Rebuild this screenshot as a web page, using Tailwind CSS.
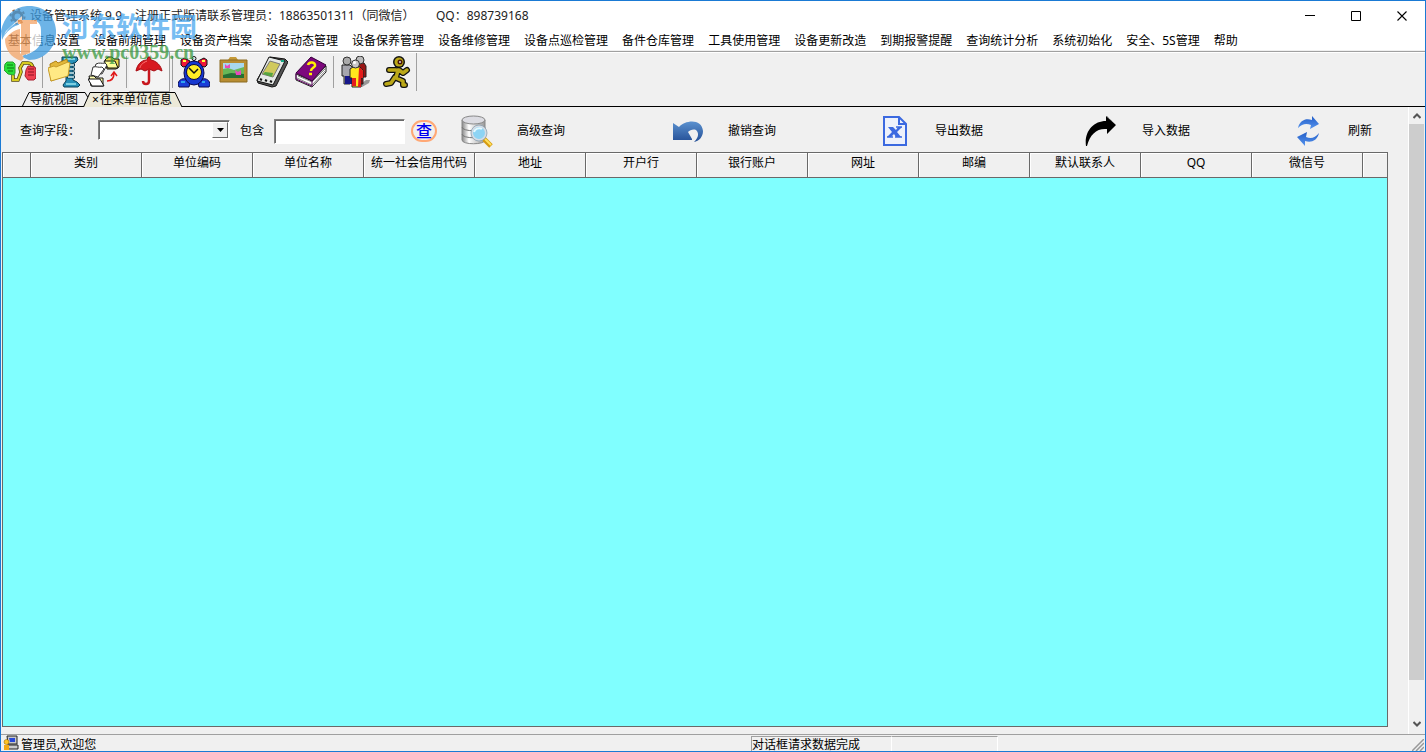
<!DOCTYPE html>
<html lang="zh-CN">
<head>
<meta charset="utf-8">
<title>设备管理系统 9.9</title>
<script src="https://cdn.jsdelivr.net/npm/@tailwindcss/browser@4"></script>
</head>
<body class="h-screen overflow-hidden bg-[#f0f0f0] text-black text-xs font-['Noto_Sans','Noto_Sans_CJK_SC',sans-serif]">
<div class="relative flex h-full flex-col border border-[#1a7ad4]">

  <!-- title bar -->
  <header class="flex h-[30px] shrink-0 items-center bg-white pl-2 whitespace-pre">
    <svg class="mr-1 size-[17px]" viewBox="0 0 17 17"><circle cx="8.500" cy="8.500" r="4.500" fill="none" stroke="#a8602c" stroke-width="3"/><circle cx="8.500" cy="8.500" r="7" fill="none" stroke="#a8602c" stroke-width="2" stroke-dasharray="2.500 3"/></svg>
    <h1 class="flex text-[#222]"><span class="w-[105px]">设备管理系统 9.9</span><span class="w-[301px]">注册正式版请联系管理员：18863501311（同微信）</span><span>QQ：898739168</span></h1>
    <div class="ml-auto flex">
      <button aria-label="最小化" class="grid h-7 w-[46px] place-items-center"><svg class="size-[11px]" viewBox="0 0 11 11"><path d="M0 4.500h10" stroke="#000"/></svg></button>
      <button aria-label="最大化" class="grid h-7 w-[46px] place-items-center"><svg class="size-[11px]" viewBox="0 0 11 11"><path d="M.5.500h9v9h-9z" stroke="#000" fill="none"/></svg></button>
      <button aria-label="关闭" class="grid h-7 w-[46px] place-items-center"><svg class="size-[11px]" viewBox="0 0 11 11"><path d="M.5.500l9 9M9.500.500l-9 9" stroke="#000" stroke-width="1.100"/></svg></button>
    </div>
  </header>

  <!-- menu -->
  <nav class="flex h-[19px] shrink-0 items-center gap-[14px] bg-white pl-[7px] whitespace-nowrap">
    <button>基本信息设置</button><button>设备前期管理</button><button>设备资产档案</button><button>设备动态管理</button><button>设备保养管理</button><button>设备维修管理</button><button>设备点巡检管理</button><button>备件仓库管理</button><button>工具使用管理</button><button>设备更新改造</button><button>到期报警提醒</button><button>查询统计分析</button><button>系统初始化</button><button>安全、5S管理</button><button>帮助</button>
  </nav>

  <!-- toolbar -->
  <div class="mt-px flex h-[41px] shrink-0 items-center border-t border-[#a0a0a0] pl-[3px] shadow-[inset_0_1px_0_#fff]">
    <button aria-label="连接"><svg class="size-8" viewBox="0 0 32 32"><path d="M9 19l0 5h5l3-8-1-4 3-5h5q4 0 5 5" fill="none" stroke="#554a08" stroke-width="3.500"/><path d="M9 19l0 5h5l3-8-1-4 3-5h5q4 0 5 5" fill="none" stroke="#d8cc20" stroke-width="2"/><path d="M1 8l2-2h6l2 2v9l-1 2-6-1-4-4z" fill="#28e038" stroke="#2aa030"/><path d="M3 9h6M3 12h7M4 15h5" stroke="#0a7810"/><path d="M22 14l2-4 7 1 1 3v8l-2 2h-6l-3-4z" fill="#f04050" stroke="#a82030"/><path d="M24 13h6M24 16h6M24 19h6" stroke="#8c1020"/></svg></button>
    <i class="ml-[6px] h-8 w-px bg-[#a0a0a0]"></i>
    <button aria-label="压缩文件" class="ml-[5px]"><svg class="size-8" viewBox="0 0 32 32"><path d="M14 1h15l1 3-3 3h-2v17l4 2 3 3-2 2H16l-1-2 3-4V7l-4-2z" fill="#2790b8" stroke="#073d55"/><path d="M16 3h11M18 28h10" stroke="#9ce3ee" stroke-width="1.500"/><path d="M19 9h8M19 13h8M19 17h8M19 21h8" stroke="#073d55" stroke-width="3"/><path d="M20 9h6M20 13h6M20 17h6M20 21h6" stroke="#d8f4f8" stroke-width="1.500"/><path d="M2 8l6-3 2 2 9-4 2 15L3 25z" fill="#e3b83a" stroke="#ad8015"/><path d="M0 12l6-2 2 1 12-5 2 1-2 13L3 25z" fill="#ffe984" stroke="#c79b28"/></svg></button>
    <button aria-label="移动文件" class="ml-2"><svg class="size-8" viewBox="0 0 32 32"><path d="M17 4l3-3h4l2 2h5l0 8-3 2h-9z" fill="#ead54c" stroke="#111"/><path d="M16 5h11l3 7H20z" fill="#ffff9a" stroke="#111"/><path d="M8 8c4-2 5 0 9-1l2 2-5 9-9-2z" fill="#fff" stroke="#333"/><path d="M5 11c4-1 5 1 9 0l2 2-6 8-7-2z" fill="#fff" stroke="#333"/><path d="M1 20h5l2 2h7v8H3z" fill="#ffffb0" stroke="#111"/><path d="M0 23h12l4 7H4z" fill="#fff" stroke="#111"/><path d="M19 25c5 0 7-3 7-8m-3 3 3-4 3 4" fill="none" stroke="#e01818" stroke-width="1.500"/></svg></button>
    <i class="ml-[6px] h-8 w-px bg-[#a0a0a0]"></i>
    <button aria-label="往来单位" class="ml-[2px] grid h-10 w-[41px] place-items-center border-r border-b border-[#a0a0a0] bg-[#f4f4f4]"><svg class="size-8" viewBox="0 0 32 32"><path d="M15 1l2 0 1 3C24 5 28 10 29 15l-4-2-4 2-5-2-4 2-4-2-5 2C4 9 8 4 14 4z" fill="#d71920" stroke="#a80d14"/><path d="M14 5c-5 2-7 5-7 7" stroke="#ff7777" fill="none"/><path d="M16 13v12q0 3-3 3t-3-3" fill="none" stroke="#c8171e" stroke-width="2.500"/></svg></button>
    <i class="ml-[2px] h-8 w-px bg-[#a0a0a0]"></i>
    <button aria-label="提醒" class="ml-[5px]"><svg class="size-8" viewBox="0 0 32 32"><path d="M16 1v6" stroke="#111" stroke-width="2"/><circle cx="16" cy="2.500" r="2" fill="#eee" stroke="#111"/><path d="M3 4l3-2 6 3-2 5-5 1-2-2zM29 4l-3-2-6 3 2 5 5 1 2-2z" fill="#ee1838" stroke="#111"/><path d="M5 5h3M24 5h3" stroke="#ffff40" stroke-width="2"/><path d="M0 29c0-5 4-7 8-6l4 4-1 4H1zM32 29c0-5-4-7-8-6l-4 4 1 4h10z" fill="#1a3ed8" stroke="#080850"/><path d="M3 26h4M24 26h3" stroke="#38c8f8" stroke-width="1.500"/><ellipse cx="16" cy="17" rx="10" ry="12" fill="#1638d0" stroke="#080850"/><circle cx="16" cy="16" r="7.500" fill="#ffed26" stroke="#080850"/><path d="M11 12l5 5 4-4" fill="none" stroke="#111" stroke-width="1.500"/></svg></button>
    <button aria-label="图片" class="ml-[7px]"><svg class="size-8" viewBox="0 0 32 32"><path d="M11 4l2-3h6l2 3z" fill="#c59a38"/><path d="M3 4h27v22H3z" fill="#b88d32" stroke="#8b6b20"/><path d="M6 7h21v15H6z" fill="#a8d8ee"/><path d="M6 13l5-1 6 2 10-3v11H6z" fill="#68b858"/><path d="M6 19l8-2 13 1v4H6z" fill="#267034"/><path d="M8 8l2 2 3-2v4H8zM18 14l3 2 3-2v5h-5z" fill="#e948bd"/></svg></button>
    <button aria-label="手持设备" class="ml-[7px]"><svg class="size-8" viewBox="0 0 32 32"><path d="M14 1l15 2 3 3-12 24-4 1-14-4-1-3z" fill="#555" stroke="#111"/><path d="M13 1l16 4-12 24L1 25z" fill="#e5e8e6" stroke="#111"/><path d="M14 5l10 3-7 13-11-3z" fill="#d0c95d" stroke="#777"/><path d="M9 16l8 1-1 4-9-3z" fill="#55a440"/><path d="M4 23l2 1m3 0 2 1m3 0 2 1" stroke="#111" stroke-width="2"/><path d="M25 5h3" stroke="#16a884" stroke-width="2"/></svg></button>
    <button aria-label="帮助手册" class="ml-[7px]"><svg class="size-8" viewBox="0 0 32 32"><path d="M1 18l16 7L31 10v6L17 31 1 24z" fill="#fff" stroke="#222"/><path d="M3 20l14 6L31 12M2 22l15 7 14-15" fill="none" stroke="#888"/><path d="M1 17L16 1l15 8-14 16z" fill="#7d087d" stroke="#36003a"/><path d="M1 17v6l16 7v-5" fill="none" stroke="#5d0060"/><path d="M13 9c1-4 8-3 7 1-1 2-4 2-4 5" fill="none" stroke="#fff000" stroke-width="2.500"/><path d="M14 18h3" stroke="#fff000" stroke-width="2.500"/></svg></button>
    <i class="ml-[6px] h-8 w-px bg-[#a0a0a0]"></i>
    <button aria-label="用户" class="ml-[6px]"><svg class="size-8" viewBox="0 0 32 32"><path d="M18 30l8-6h4l-1 3-7 4z" fill="#999"/><path d="M2 9h8l3 3v10h-3v6H4V20H2z" fill="#a6a6ad" stroke="#222"/><path d="M5 20h8v8H5z" fill="#17178a"/><path d="M17 7h7l2 3v11h-3v7h-6z" fill="#981515" stroke="#222"/><path d="M10 13l3-2h7l3 3v8h-2v9h-9v-9h-2z" fill="#ffe61d" stroke="#222"/><path d="M19 12h2l2 3v7h-2v9h-3z" fill="#e41c1c"/><path d="M12 22h4v8h-4z" fill="#e41c1c"/><circle cx="7" cy="5" r="4" fill="#aaa" stroke="#333"/><circle cx="20" cy="4" r="4" fill="#bbb" stroke="#333"/><circle cx="15.500" cy="8" r="4" fill="#c8c8c8" stroke="#333"/><circle cx="14.500" cy="6.500" r="1.500" fill="#fff"/></svg></button>
    <button aria-label="退出" class="ml-[9px]"><svg class="size-8" viewBox="0 0 32 32"><path d="M15 14l-7 0M17 14l-2 8 7 3 0 4 2 0M14 21l-4 6-5 1M18 14l4 3 4-3" fill="none" stroke="#111" stroke-width="6" stroke-linecap="round" stroke-linejoin="round"/><circle cx="18" cy="6" r="6" fill="#111"/><path d="M15 14l-7 0M17 14l-2 8 7 3 0 4 2 0M14 21l-4 6-5 1M18 14l4 3 4-3" fill="none" stroke="#bba818" stroke-width="3.500" stroke-linecap="round" stroke-linejoin="round"/><circle cx="18" cy="6" r="4.500" fill="#bba818"/><circle cx="19" cy="6" r="2.500" fill="#4a1408"/><circle cx="19" cy="6" r="1" fill="#ddd"/></svg></button>
    <i class="ml-[3px] h-[38px] w-px bg-[#a0a0a0]"></i>
  </div>

  <!-- document tabs -->
  <div class="flex h-[15px] shrink-0 items-end border-b border-black pl-[21px]" role="tablist">
    <button role="tab" class="relative h-[14px] w-[66px] pl-2 text-left leading-4"><svg class="absolute inset-0 h-[14px] w-[66px]" viewBox="0 0 66 14"><path d="M.5 14L7 .5h56l3 5" fill="none" stroke="#000"/></svg><span class="relative">导航视图</span></button>
    <button role="tab" aria-selected="true" class="relative -mb-px h-[15px] w-[100px] pl-1 text-left leading-4 whitespace-nowrap"><svg class="absolute top-0 -left-2 h-[15px] w-[106px]" viewBox="0 0 106 15"><path d="M3.500 15L10 .5h85l7 14.500" fill="#ece9d8" stroke="#000"/></svg><span class="relative flex items-center"><span class="w-2">×</span>往来单位信息</span></button>
  </div>

  <main class="flex min-h-0 flex-1">
    <section class="flex min-w-0 flex-1 flex-col pr-5 pb-[7px] pl-px">
      <!-- query bar -->
      <form class="flex h-[45px] shrink-0 items-center pt-[3px] pl-[18px] whitespace-nowrap">
        <label for="field" class="w-[78px]">查询字段：</label>
        <span class="relative mb-[3px] flex h-5 w-[132px] border border-t-[#808080] border-r-white border-b-white border-l-[#808080] bg-white">
          <select id="field" class="w-full appearance-none bg-white shadow-[inset_1px_1px_0_#696969]"><option></option></select>
          <span class="pointer-events-none absolute top-px right-px grid h-4 w-4 place-items-center border border-t-white border-r-[#696969] border-b-[#696969] border-l-white bg-[#f0f0f0]"><svg class="h-1 w-[7px]" viewBox="0 0 7 4"><path d="M0 0h7L3.500 4z"/></svg></span>
        </span>
        <label for="keyword" class="ml-[10px] w-[34px]">包含</label>
        <input id="keyword" class="h-[25px] w-[131px] border border-t-[#808080] border-r-white border-b-white border-l-[#808080] bg-white px-1 shadow-[inset_1px_1px_0_#696969] outline-none">
        <button type="button" class="ml-[6px] grid h-[22px] w-[26px] place-items-center rounded-full border-2 border-[#ffa875] text-base leading-4 font-medium text-[#0000f0]">查</button>
        <button type="button" class="ml-[23px] flex items-center gap-6"><svg class="size-[33px]" viewBox="0 0 33 33"><defs><linearGradient id="metal"><stop stop-color="#888"/><stop offset=".3" stop-color="#fff"/><stop offset="1" stop-color="#999"/></linearGradient></defs><path d="M2 5v20c0 5 23 5 23 0V5" fill="url(#metal)" stroke="#888"/><ellipse cx="13.500" cy="5" rx="11.500" ry="4" fill="#dcdce2" stroke="#888"/><path d="M2 12c0 5 23 5 23 0M2 19c0 5 23 5 23 0" fill="none" stroke="#777"/><path d="M24 24l7 7" stroke="#d69b13" stroke-width="5"/><path d="M25 24l6 6" stroke="#ffe05b" stroke-width="2"/><circle cx="19" cy="18" r="7" fill="#8dd4f4" stroke="#d5dce5" stroke-width="2"/><circle cx="19" cy="18" r="8" fill="none" stroke="#7f96a8" stroke-width=".700"/><path d="M14 17c1-3 5-5 8-3" stroke="#e5f9ff" stroke-width="2" fill="none"/></svg>高级查询</button>
        <button type="button" class="ml-[107px] flex items-center gap-6"><svg class="h-6 w-8" viewBox="0 0 32 24"><defs><linearGradient id="undo" x2="0" y2="1"><stop stop-color="#5b91cf"/><stop offset="1" stop-color="#244f96"/></linearGradient></defs><path d="M1 4l6 4C13 1 30-1 31 12c0 6-4 10-9 11 5-5 5-9 2-12-3-1-6 0-8 2l4 7v1H1z" fill="url(#undo)"/></svg>撤销查询</button>
        <button type="button" class="ml-[107px] flex items-center gap-7"><svg class="h-[30px] w-6" viewBox="0 0 24 30"><path d="M1 1h15l7 7v21H1z" fill="#edf1fb" stroke="#3b69e0" stroke-width="2"/><path d="M16 1v7h7" fill="none" stroke="#3b69e0" stroke-width="2"/><path d="M5 11h5l3 3 2-3h4l-5 5 4 5h-5l-2-3-3 3H4l5-5z" fill="#3b69e0"/><path d="M13 11h6M4 21h6M12 21h7" stroke="#3b69e0" stroke-width="1.500"/></svg>导出数据</button>
        <button type="button" class="ml-[102px] flex items-center gap-[25px]"><svg class="size-8" viewBox="0 0 32 32"><path d="M1 31C-1 17 8 6 21 6V1l10 9-9 9v-5C12 13 5 19 2 31z" fill="#000"/><path d="M22 1l9 9" stroke="#999" stroke-dasharray="1 1"/></svg>导入数据</button>
        <button type="button" class="ml-[105px] flex items-center gap-[26px]"><svg class="h-8 w-[27px]" viewBox="0 0 27 32"><defs><linearGradient id="sync" x2="0" y2="1"><stop stop-color="#225dc7"/><stop offset="1" stop-color="#5795ee"/></linearGradient></defs><path d="M3 13C5 5 11 3 17 5V1l7 8-9 5 1-4c-5-2-9-1-13 3z" fill="url(#sync)"/><path d="M24 18c-2 8-8 10-14 8v5l-8-9 10-5-1 5c5 2 9 1 13-4z" fill="url(#sync)"/></svg>刷新</button>
      </form>

      <!-- records -->
      <div class="min-h-0 flex-1 overflow-hidden border border-[#696969] bg-[#80ffff]">
        <table class="w-full table-fixed border-separate border-spacing-0">
          <colgroup><col class="w-[28px]"><col><col><col><col><col><col><col><col><col><col><col><col><col class="w-6"></colgroup>
          <thead><tr class="h-[25px] bg-[#f0f0f0] whitespace-nowrap [&>th]:border-r [&>th]:border-b [&>th]:border-[#696969] [&>th]:p-0 [&>th]:pb-1 [&>th]:font-normal [&>th]:shadow-[inset_1px_1px_0_#fff] [&>th:last-child]:border-r-0">
            <th></th><th>类别</th><th>单位编码</th><th>单位名称</th><th>统一社会信用代码</th><th>地址</th><th>开户行</th><th>银行账户</th><th>网址</th><th>邮编</th><th>默认联系人</th><th>QQ</th><th>微信号</th><th></th>
          </tr></thead>
        </table>
      </div>
    </section>

    <!-- vertical scroll bar -->
    <div class="mr-px flex w-4 shrink-0 flex-col border-l border-white">
      <button aria-label="向上滚动" class="grid h-[17px] shrink-0 place-items-center"><svg class="h-[6px] w-2" viewBox="0 0 8 6"><path d="M.5 5L4 1.500 7.500 5" fill="none" stroke="#555" stroke-width="2"/></svg></button>
      <div class="min-h-0 flex-1 pb-[35px]"><div class="h-full bg-[#cdcdcd]"></div></div>
      <button aria-label="向下滚动" class="mb-[2px] grid h-[17px] shrink-0 place-items-center"><svg class="h-[6px] w-2" viewBox="0 0 8 6"><path d="M.5 1L4 4.500 7.500 1" fill="none" stroke="#555" stroke-width="2"/></svg></button>
    </div>
  </main>

  <!-- status bar -->
  <footer class="flex h-[17px] shrink-0 border-t border-[#a0a0a0] leading-4 whitespace-nowrap">
    <div class="flex w-[750px] items-center pl-[2px]"><svg class="mr-[2px] size-4" viewBox="0 0 16 16"><path d="M4 1h10v8H5z" fill="#c8c8c8" stroke="#222"/><path d="M6 3h6v4H7z" fill="#2848d8"/><path d="M4 10h11v4H4z" fill="#ccc" stroke="#222"/><circle cx="3.500" cy="7" r="2.500" fill="#ffc423" stroke="#885b00" stroke-width=".500"/><path d="M1 10h5v5H1z" fill="#f3aa13"/></svg><span class="pt-[3px]">管理员,欢迎您</span></div>
    <div class="mt-px w-[141px] border-t border-r border-l border-t-[#a0a0a0] border-r-white border-l-[#a0a0a0]">对话框请求数据完成</div>
    <div class="mt-px w-[106px] border-t border-r border-t-[#a0a0a0] border-r-white"></div>
    <svg class="mt-1 mr-px ml-auto size-3" viewBox="0 0 12 12"><path d="M0 12L12 0M4 12l8-8M8 12l4-4" stroke="#999" stroke-width="1.500"/></svg>
  </footer>

  <!-- download site watermark -->
  <div class="pointer-events-none absolute top-0 left-0 flex opacity-75" aria-hidden="true">
    <svg class="h-[62px] w-[60px]" viewBox="0 0 60 62"><path d="M0 30C3 15 13 6 26 5c16-1 28 9 29 24 1 17-11 30-27 30l-7-3c2-3 6-5 12-7V23H20C12 25 5 30 1 39z" fill="#3d9be0"/><path d="M2 36C7 27 13 22 21 20v-5L5 30z" fill="#fff"/><path d="M4 38c4-5 9-9 15-10v24l4 5-3 3C9 56 4 48 4 38z" fill="#f3a466"/><path d="M18 20h17c4 2 5 5 5 10v12c-3 6-8 9-15 12V27h-7z" fill="#fff"/><path d="M20 20h9v32l-9 3z" fill="#f3a466"/><path d="M17 19h19v4H17z" fill="#f3a466"/></svg>
    <div class="pt-[9px] pl-px whitespace-nowrap">
      <div class="text-[27px] leading-8 font-bold text-[#4aa8ee] font-['Noto_Sans_CJK_SC',sans-serif]">河东软件园</div>
      <div class="text-xl leading-5 font-bold text-[#3a9a40] font-['Liberation_Serif',serif]">www.pc0359.cn</div>
    </div>
  </div>
</div>
</body>
</html>
